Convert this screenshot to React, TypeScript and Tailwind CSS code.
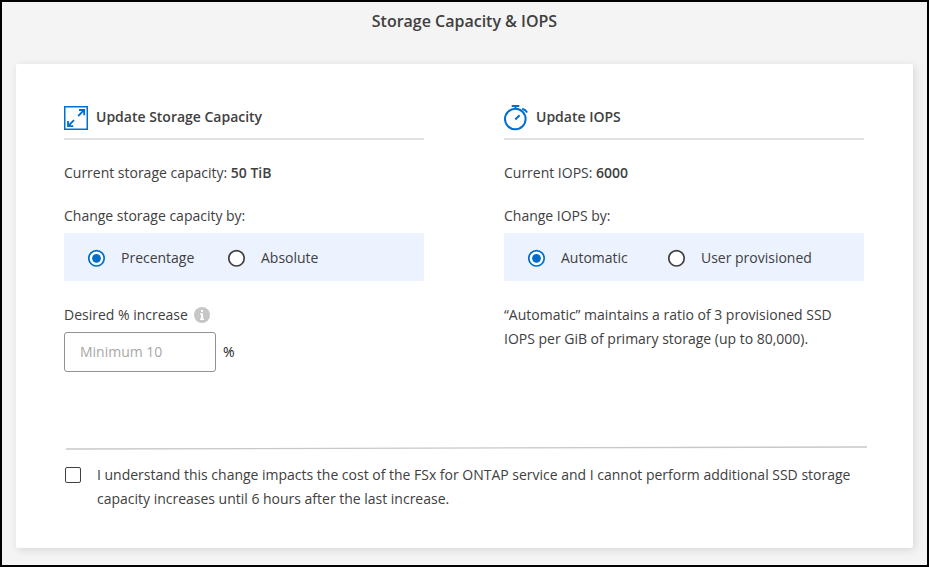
import React from "react";

function Radio({ label, checked, width }: { label: string; checked?: boolean; width: string }) {
  return (
    <div className={`flex items-center ${width}`}>
      <svg width="18" height="18" viewBox="0 0 18 18" className="mr-[15px] shrink-0">
        <circle cx="8.5" cy="9.3" r="7.7" fill="#fff" stroke={checked ? "#006dc9" : "#404040"} strokeWidth="1.7" />
        {checked && <circle cx="8.5" cy="9.3" r="4.4" fill="#006dc9" />}
      </svg>
      <span className="whitespace-nowrap">{label}</span>
    </div>
  );
}

function ExpandIcon() {
  return (
    <svg width="24" height="24" viewBox="0 0 24 24" fill="none" stroke="#0070d0" strokeWidth="1.5">
      <rect x="0.75" y="0.75" width="22.5" height="22.5" />
      <path d="M14.2 10 20 4.2M15 4H20.2V9.3M10 14.2 4.2 20M4 15V20.2H9.3" strokeWidth="1.8" />
    </svg>
  );
}

function TimerIcon() {
  return (
    <svg width="24" height="26" viewBox="0 0 24 26" fill="none" stroke="#0070d0" strokeWidth="2">
      <circle cx="11.3" cy="14" r="10.3" />
      <path d="M7.7 1H15.3M11.5 1V4M11.3 14.5 15.6 10.2" />
      <path d="M18.2 3.8Q21.6 4.6 23.2 7.5" />
    </svg>
  );
}

export default function App() {
  return (
    <main className="flex h-[567px] w-[929px] flex-col border-2 border-black bg-[#f4f4f4] pl-[14px] pr-[14px] font-['Open_Sans',sans-serif] text-[14px] leading-6 tracking-[-0.009px] text-[#404040]">
      <h1 className="mt-[7px] text-center text-base leading-6 font-semibold">Storage Capacity &amp; IOPS</h1>
      <section className="mt-[31px] h-[484px] w-[897px] rounded-[2px] bg-white px-12 shadow-[2px_2px_8px_rgba(0,0,0,0.12)]">
        <div className="flex h-[382px] gap-20">
          <div className="w-[360px] pt-[41px]">
            <header className="flex h-[35px] items-start border-b-2 border-[#e1e1e1]">
              <div className="mt-px mr-2"><ExpandIcon /></div>
              <h2 className="font-semibold">Update Storage Capacity</h2>
            </header>
            <p className="mt-[21px]">Current storage capacity: <b className="font-semibold">50 TiB</b></p>
            <p className="mt-[19px]">Change storage capacity by:</p>
            <div className="mt-[5px] flex h-12 bg-[#ecf3ff] pt-[2px] pl-6">
              <Radio label="Precentage" checked width="w-[140px]" />
              <Radio label="Absolute" width="w-[140px]" />
            </div>
            <div className="mt-[22px] flex items-center">
              Desired % increase
              <svg width="16" height="16" viewBox="0 0 16 16" className="ml-[6px]">
                <circle cx="8" cy="8" r="8" fill="#c6c6c6" />
                <path d="M7 3h2v2H7zM6 6.2h3V11.5h1V13H6V11.5h1V7.5H6z" fill="#fff" />
              </svg>
            </div>
            <div className="mt-[5px] flex items-center">
              <input placeholder="Minimum 10" className="h-10 w-[152px] rounded-[3px] border border-[#929292] bg-white px-[15px] pb-[2px] placeholder:text-[#a7a7a7]" />
              <span className="ml-[7px] text-[#242424]">%</span>
            </div>
          </div>
          <div className="w-[360px] pt-[41px]">
            <header className="flex h-[35px] items-start border-b-2 border-[#e1e1e1]">
              <div className="mr-2"><TimerIcon /></div>
              <h2 className="font-semibold">Update IOPS</h2>
            </header>
            <p className="mt-[21px]">Current IOPS: <b className="font-semibold">6000</b></p>
            <p className="mt-[19px]">Change IOPS by:</p>
            <div className="mt-[5px] flex h-12 bg-[#ecf3ff] pt-[2px] pl-6">
              <Radio label="Automatic" checked width="w-[140px]" />
              <Radio label="User provisioned" width="w-[180px]" />
            </div>
            <p className="mt-[22px] whitespace-nowrap">“Automatic” maintains a ratio of 3 provisioned SSD<br />IOPS per GiB of primary storage (up to 80,000).</p>
          </div>
        </div>
        <svg width="803" height="4" viewBox="0 0 803 4" className="ml-px block"><path d="M1 3 802 1" stroke="#c8c8c8" strokeWidth="1.3" /></svg>
        <div className="mt-[13px] flex">
          <div className="mt-1 mr-4 ml-px h-4 w-4 shrink-0 rounded-[2px] border border-[#404040]" />
          <p className="whitespace-nowrap">I understand this change impacts the cost of the FSx for ONTAP service and I cannot perform additional SSD storage<br />capacity increases until 6 hours after the last increase.</p>
        </div>
      </section>
    </main>
  );
}
